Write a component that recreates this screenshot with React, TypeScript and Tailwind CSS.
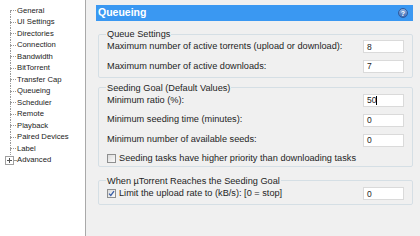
import { ReactNode } from 'react';

const TREE = [
  'General',
  'UI Settings',
  'Directories',
  'Connection',
  'Bandwidth',
  'BitTorrent',
  'Transfer Cap',
  'Queueing',
  'Scheduler',
  'Remote',
  'Playback',
  'Paired Devices',
  'Label',
];

function TreeRow({ label, first }: { label: string; first?: boolean }) {
  return (
    <div className="h-[11.5px] flex items-center">
      <span className="w-[10px] shrink-0" />
      <span className="w-[6px] h-full flex flex-col shrink-0">
        <span className={`flex-1 ${first ? '' : 'border-l border-dotted border-[#9a9a9a]'}`} />
        <span className="border-t border-dotted border-[#9a9a9a]" />
        <span className="flex-1 border-l border-dotted border-[#9a9a9a]" />
      </span>
      <span className="pl-[1px] whitespace-nowrap">{label}</span>
    </div>
  );
}

function Input({ value, caret }: { value: string; caret?: boolean }) {
  return (
    <div className="w-[41px] h-[13px] bg-white border border-[#dadada] flex items-center pl-[3px] text-[8.5px]">
      {value}
      {caret && <span className="w-[1px] h-[9px] bg-black" />}
    </div>
  );
}

function Checkbox({ checked }: { checked?: boolean }) {
  return (
    <span className="w-[9px] h-[9px] border border-[#8e8f8f] bg-gradient-to-br from-[#dcdcdc] to-[#fafafa] flex items-center justify-center shrink-0">
      {checked && (
        <svg width="7" height="7" viewBox="0 0 7 7">
          <path d="M1 3.6 L2.8 5.4 L6 1.2" fill="none" stroke="#3a5fa8" strokeWidth="1.3" />
        </svg>
      )}
    </span>
  );
}

function Group({ title, children, className }: { title: string; children: ReactNode; className: string }) {
  return (
    <fieldset className={`border border-[#d5dfe5] rounded-[2px] ml-[2px] ${className}`}>
      <legend className="ml-[7px] px-[1px] leading-[12px]">{title}</legend>
      {children}
    </fieldset>
  );
}

function Row({ label, children }: { label: string; children?: ReactNode }) {
  return (
    <div className="flex items-center justify-between pl-[8px] pr-[8px]">
      <span>{label}</span>
      {children}
    </div>
  );
}

export default function App() {
  return (
    <div className="w-[420px] h-[236px] flex overflow-hidden bg-[#f0f0f0] text-[#1e1e1e] text-[9.2px] font-['Liberation_Sans',Arial,sans-serif]">
      {/* option tree */}
      <div className="w-[86px] shrink-0 bg-white border-r border-[#a9a9a9] pt-[5px] text-[7.7px] text-[#222]">
        {TREE.map((t, i) => (
          <TreeRow key={t} label={t} first={i === 0} />
        ))}
        <div className="h-[11.5px] flex items-center">
          <span className="w-[5px] shrink-0" />
          <span className="w-[9px] h-[9px] border border-[#a0a0a0] bg-white flex items-center justify-center shrink-0">
            <svg width="5" height="5" viewBox="0 0 5 5">
              <path d="M0 2.5 H5 M2.5 0 V5" stroke="#555" strokeWidth="1" />
            </svg>
          </span>
          <span className="w-[2px] border-t border-dotted border-[#9a9a9a]" />
          <span className="pl-[1px]">Advanced</span>
        </div>
      </div>

      {/* settings page */}
      <div className="flex-1 pl-[10px] pr-[7px] pt-[5px] flex flex-col">
        <div className="h-[16px] bg-[#3a98f2] flex items-center justify-between pl-[2px] pr-[5px]">
          <span className="text-white font-bold text-[10.5px]">Queueing</span>
          <span className="w-[10px] h-[10px] rounded-full bg-gradient-to-b from-[#8fb1e0] to-[#3f6cb5] border border-[#2f5a9c] text-white text-[7px] font-bold flex items-center justify-center leading-none">
            ?
          </span>
        </div>

        <Group title="Queue Settings" className="mt-[7px] pb-[3px]">
          <div className="flex flex-col gap-[6px]">
            <Row label="Maximum number of active torrents (upload or download):">
              <Input value="8" />
            </Row>
            <Row label="Maximum number of active downloads:">
              <Input value="7" />
            </Row>
          </div>
        </Group>

        <Group title="Seeding Goal (Default Values)" className="mt-[4px] pb-[1px]">
          <div className="flex flex-col gap-[6px]">
            <Row label="Minimum ratio (%):">
              <Input value="50" caret />
            </Row>
            <Row label="Minimum seeding time (minutes):">
              <Input value="0" />
            </Row>
            <Row label="Minimum number of available seeds:">
              <Input value="0" />
            </Row>
            <div className="flex items-center gap-[3px] pl-[8px] h-[12px]">
              <Checkbox />
              <span>Seeding tasks have higher priority than downloading tasks</span>
            </div>
          </div>
        </Group>

        <Group title="When µTorrent Reaches the Seeding Goal" className="mt-[8px] pb-[3px]">
          <div className="flex items-center justify-between pl-[8px] pr-[8px]">
            <div className="flex items-center gap-[3px]">
              <Checkbox checked />
              <span>Limit the upload rate to (kB/s): [0 = stop]</span>
            </div>
            <Input value="0" />
          </div>
        </Group>
      </div>
    </div>
  );
}
